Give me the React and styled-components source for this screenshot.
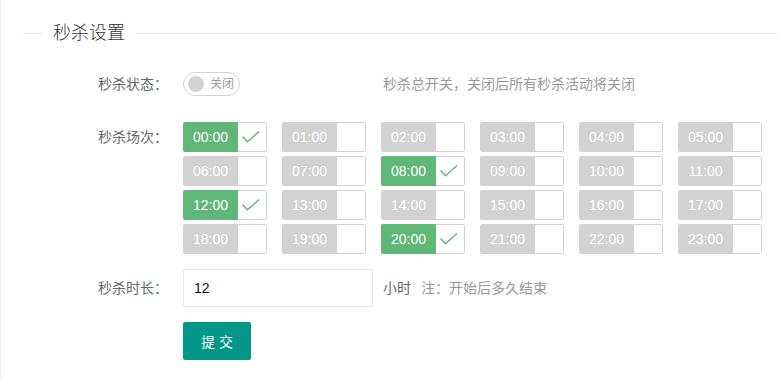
import React from "react";
import styled, { createGlobalStyle } from "styled-components";

const GlobalStyle = createGlobalStyle`
  html, body {
    margin: 0;
    padding: 0;
    background: #fff;
  }
  body {
    font-family: "Liberation Sans", "Noto Sans CJK SC", sans-serif;
    font-size: 14px;
    color: #666;
  }
  * {
    box-sizing: border-box;
  }
`;

//slots of the day
const hours = Array.from({ length: 24 }, (_, i) =>
  `${String(i).padStart(2, "0")}:00`
);
const checkedHours = ["00:00", "08:00", "12:00", "20:00"];

function SecKill() {
  return (
    <Page>
      <GlobalStyle />
      <Title>
        <TitleLine className="short" />
        <TitleText>秒杀设置</TitleText>
        <TitleLine />
      </Title>
      <Form>
        <FormItem>
          <Label>秒杀状态：</Label>
          <Inline>
            <Switch>
              <Knob />
              <SwitchText>关闭</SwitchText>
            </Switch>
          </Inline>
          <Aux>秒杀总开关，关闭后所有秒杀活动将关闭</Aux>
        </FormItem>
        <FormItem>
          <Label>秒杀场次：</Label>
          <SlotGrid>
            {hours.map((h) => {
              const on = checkedHours.includes(h);
              return (
                <Slot key={h}>
                  <SlotText $on={on}>{h}</SlotText>
                  <SlotIcon>
                    {on && (
                      <svg width="18" height="12" viewBox="0 0 18 12">
                        <polyline
                          points="0.5,5.5 5.5,10.8 17,0.6"
                          fill="none"
                          stroke="#5FB878"
                          strokeWidth="1.4"
                        />
                      </svg>
                    )}
                  </SlotIcon>
                </Slot>
              );
            })}
          </SlotGrid>
        </FormItem>
        <FormItem>
          <Label>秒杀时长：</Label>
          <Input defaultValue="12" />
          <Mid>小时</Mid>
          <Note>注：开始后多久结束</Note>
        </FormItem>
        <FormItem>
          <Label />
          <Button>提 交</Button>
        </FormItem>
      </Form>
    </Page>
  );
}

const Page = styled.div`
  min-height: 380px;
  border-left: 1px solid #ececec;
  padding: 21px 1px 0 22px;
`;

const Title = styled.div`
  display: flex;
  align-items: center;
  height: 24px;
  margin-bottom: 20px;
`;

const TitleLine = styled.div`
  height: 1px;
  background: #e6e6e6;
  flex: 1;
  &.short {
    flex: none;
    width: 20px;
  }
`;

const TitleText = styled.span`
  padding: 0 10px;
  font-size: 18px;
  line-height: 24px;
  font-weight: 300;
  color: #333;
`;

const Form = styled.div`
  padding-left: 50px;
`;

const FormItem = styled.div`
  display: flex;
  align-items: flex-start;
  margin-bottom: 15px;
`;

const Label = styled.label`
  flex: none;
  width: 110px;
  padding: 9px 15px;
  line-height: 20px;
  text-align: right;
  color: #666;
`;

const Inline = styled.div`
  width: 190px;
  margin-right: 10px;
`;

const Switch = styled.div`
  display: flex;
  align-items: center;
  width: 57px;
  height: 24px;
  margin-top: 7px;
  padding-left: 4px;
  border: 1px solid #d2d2d2;
  border-radius: 12px;
  background: #fff;
`;

const Knob = styled.span`
  width: 16px;
  height: 16px;
  border-radius: 50%;
  background: #d2d2d2;
`;

const SwitchText = styled.em`
  margin-left: 6px;
  font-style: normal;
  font-size: 12px;
  line-height: 22px;
  color: #999;
`;

const Aux = styled.div`
  padding: 9px 0;
  line-height: 20px;
  color: #999;
`;

const SlotGrid = styled.div`
  display: grid;
  grid-template-columns: repeat(6, 84px);
  column-gap: 15px;
  row-gap: 4px;
  padding-top: 4px;
`;

const Slot = styled.div`
  display: flex;
  height: 30px;
  border-radius: 2px;
  overflow: hidden;
`;

const SlotText = styled.span`
  width: 55px;
  line-height: 30px;
  text-align: center;
  color: #fff;
  font-size: 14px;
  background: ${(p) => (p.$on ? "#5FB878" : "#d2d2d2")};
`;

const SlotIcon = styled.span`
  flex: 1;
  display: flex;
  align-items: center;
  justify-content: center;
  padding-right: 2px;
  border: 1px solid #d2d2d2;
  border-left: none;
  border-radius: 0 2px 2px 0;
`;

const Input = styled.input`
  width: 190px;
  height: 38px;
  padding: 0 10px;
  border: 1px solid #e6e6e6;
  border-radius: 2px;
  font-family: "Liberation Sans", "Noto Sans CJK SC", sans-serif;
  font-size: 14px;
  color: #111;
  outline: none;
`;

const Mid = styled.div`
  margin-left: 10px;
  padding: 9px 0;
  line-height: 20px;
  color: #666;
`;

const Note = styled.div`
  margin-left: 10px;
  padding: 9px 0;
  line-height: 20px;
  color: #999;
`;

const Button = styled.button`
  height: 38px;
  padding: 0 18px;
  border: none;
  border-radius: 2px;
  background: #009688;
  color: #fff;
  font-family: "Liberation Sans", "Noto Sans CJK SC", sans-serif;
  font-size: 14px;
  cursor: pointer;
`;

export default SecKill;
